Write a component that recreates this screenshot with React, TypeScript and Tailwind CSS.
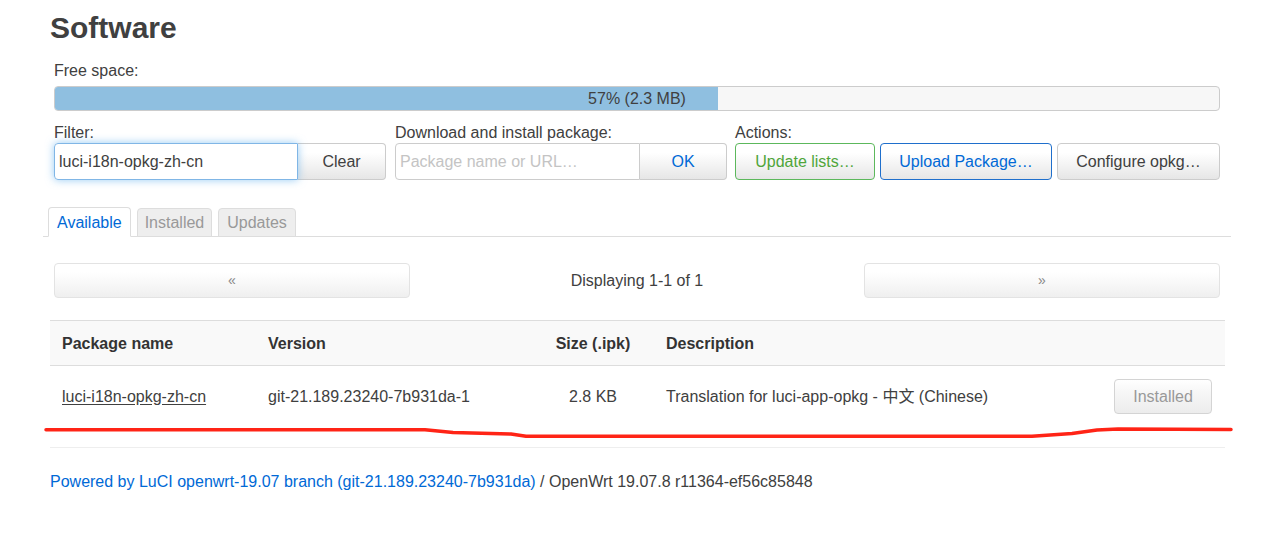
export default function App() {
  const btn = 'h-[36px] rounded-[4px] border bg-[linear-gradient(#ffffff,#ffffff_25%,#e6e6e6)] text-[16px] leading-none';

  return (
    <div className="relative min-h-[543px] w-[1281px] bg-white text-[16px] text-[#404040] font-['Liberation_Sans',Arial,'Noto_Sans_CJK_SC',sans-serif]">
      <div className="ml-[43px] w-[1188px]">
        <h2 className="pl-[7px] pt-[10px] text-[30px] leading-[36px] font-bold text-[#404040]">Software</h2>

        {/* free space + controls */}
        <div className="px-[11px]">
          <div className="mt-[14px] pt-[1px] leading-[20px]">Free space:</div>
          <div className="relative mt-[5px] h-[25px] rounded-[4px] border border-[#cccccc] bg-[#f7f7f7] overflow-hidden">
            <div className="h-full w-[57%] bg-[#8fbfe0]" />
            <div className="absolute inset-0 flex items-center justify-center pt-[1px] text-[16px] text-[#404040]">57% (2.3 MB)</div>
          </div>

          <div className="mt-[10px] flex">
            <div className="w-[332px]">
              <div className="pt-[2px] leading-[20px]">Filter:</div>
              <div className="flex h-[37px]">
                <input
                  readOnly
                  value="luci-i18n-opkg-zh-cn"
                  className="relative z-10 h-full w-[244px] rounded-l-[4px] border border-[#80b6e6] px-[4px] pt-[1px] text-[16px] text-[#404040] outline-none shadow-[0_0_8px_rgba(82,168,236,0.6)]"
                />
                <button className={`${btn} h-[37px] w-[88px] rounded-l-none border-[#cccccc] border-l-0 pt-[1px] text-[#404040]`}>Clear</button>
              </div>
            </div>
            <div className="ml-[9px] w-[332px]">
              <div className="pt-[2px] leading-[20px]">Download and install package:</div>
              <div className="flex h-[37px]">
                <input
                  readOnly
                  placeholder="Package name or URL…"
                  className="h-full w-[245px] rounded-l-[4px] border border-[#cccccc] px-[4px] pt-[1px] text-[16px] text-[#404040] outline-none placeholder:text-[#c4c4c4]"
                />
                <button className={`${btn} h-[37px] w-[87px] rounded-l-none border-[#cccccc] border-l-0 pt-[1px] text-[#0069d6]`}>OK</button>
              </div>
            </div>
            <div className="ml-[8px] flex-1">
              <div className="pt-[2px] leading-[20px]">Actions:</div>
              <div className="flex gap-[5px]">
                <button className={`${btn} h-[37px] w-[140px] border-[#5cb85c] pt-[1px] text-[#4fa53a]`}>Update lists…</button>
                <button className={`${btn} h-[37px] w-[172px] border-[#1f6fcc] pt-[1px] text-[#0069d6]`}>Upload Package…</button>
                <button className={`${btn} h-[37px] w-[163px] border-[#cccccc] pt-[1px] text-[#404040]`}>Configure opkg…</button>
              </div>
            </div>
          </div>
        </div>

        {/* tabs */}
        <div className="mt-[27px] flex items-end gap-[6px] border-b border-[#dddddd] pl-[5px]">
          <div className="-mb-px flex h-[30px] items-center rounded-t-[4px] border border-[#dddddd] border-b-white bg-white px-[8px] pt-[1px] text-[#0069d6]">Available</div>
          <div className="-mb-px flex h-[29px] items-center rounded-t-[4px] border border-[#dddddd] bg-[#eeeeee] px-[7px] pt-[1px] text-[#999999]">Installed</div>
          <div className="-mb-px flex h-[29px] items-center rounded-t-[4px] border border-[#dddddd] bg-[#eeeeee] px-[8px] pt-[1px] text-[#999999]">Updates</div>
        </div>

        {/* pager */}
        <div className="mx-[11px] mt-[26px] flex items-center justify-between">
          <button className="h-[35px] w-[356px] rounded-[4px] border border-[#e3e3e3] bg-[linear-gradient(#ffffff,#ffffff_25%,#efefef)] text-[14px] text-[#888888]">«</button>
          <div className="pt-[1px] text-[16px] text-[#404040]">Displaying 1-1 of 1</div>
          <button className="h-[35px] w-[356px] rounded-[4px] border border-[#e3e3e3] bg-[linear-gradient(#ffffff,#ffffff_25%,#efefef)] text-[14px] text-[#888888]">»</button>
        </div>

        {/* table */}
        <div className="ml-[7px] mt-[22px] w-[1175px]">
          <div className="grid h-[46px] grid-cols-[206px_288px_98px_1fr] items-center border-y border-[#dddddd] bg-[#f9f9f9] pt-[1px] font-bold text-[#333333]">
            <div className="pl-[12px]">Package name</div>
            <div className="pl-[12px]">Version</div>
            <div className="text-center">Size (.ipk)</div>
            <div className="pl-[24px]">Description</div>
          </div>
          <div className="grid h-[60px] grid-cols-[206px_288px_98px_1fr_auto] items-center text-[#404040]">
            <div className="pl-[12px] pt-[1px]"><span className="underline underline-offset-2">luci-i18n-opkg-zh-cn</span></div>
            <div className="pl-[12px] pt-[1px]">git-21.189.23240-7b931da-1</div>
            <div className="pt-[1px] text-center">2.8 KB</div>
            <div className="pl-[24px] pt-[1px]">Translation for luci-app-opkg - 中文 (Chinese)</div>
            <div className="pr-[13px]">
              <button className="h-[35px] w-[98px] rounded-[4px] border border-[#d4d4d4] bg-[linear-gradient(#ffffff,#f6f6f6_40%,#ececec)] pt-[1px] text-[16px] text-[#999999]">Installed</button>
            </div>
          </div>

          <div className="mt-[21px] border-t border-[#eeeeee] pt-[24px] leading-[20px]">
            <span className="text-[#0069d6]">Powered by LuCI openwrt-19.07 branch (git-21.189.23240-7b931da)</span>
            <span> / OpenWrt 19.07.8 r11364-ef56c85848</span>
          </div>
        </div>
      </div>

      {/* hand-drawn annotation */}
      <svg className="pointer-events-none absolute left-0 top-0" width="1281" height="543">
        <polyline
          points="46,429.7 425,429.7 453,432.5 511,434 526,436.3 1032,436.3 1072,433.5 1097,430 1118,429 1231,429.5"
          fill="none"
          stroke="#ff2416"
          strokeWidth="3.5"
          strokeLinecap="round"
          strokeLinejoin="round"
        />
      </svg>
    </div>
  );
}
